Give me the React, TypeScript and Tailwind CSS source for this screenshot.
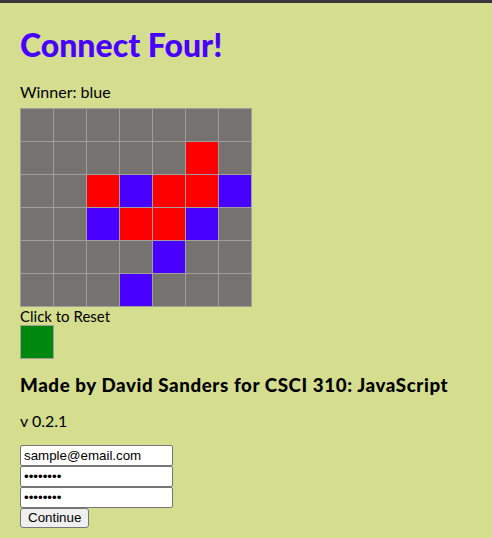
import React from "react";

type Cell = "" | "r" | "b";

const BOARD: Cell[][] = [
  ["", "", "", "", "", "", ""],
  ["", "", "", "", "", "r", ""],
  ["", "", "r", "b", "r", "r", "b"],
  ["", "", "b", "r", "r", "b", ""],
  ["", "", "", "", "b", "", ""],
  ["", "", "", "b", "", "", ""],
];

function cellColor(c: Cell) {
  if (c === "r") return "bg-[#ff0000]";
  if (c === "b") return "bg-[#4800ff]";
  return "bg-[#767270]";
}

export default function App() {
  return (
    <div className="min-h-screen bg-[#d5dd8f] font-['Lato',sans-serif] text-black">
      <div className="h-[3px] bg-[#38383c]" />
      <div className="pl-[20px] flex flex-col items-start">
        <h1 className="mt-[22px] text-[32px] leading-[40px] font-black text-[#4800ff]">Connect Four!</h1>
        <p className="mt-[17px] text-[16px] leading-[20px]">Winner: blue</p>
        <div className="mt-[6px] grid grid-cols-7 border-l border-t border-[#a19e9c]">
          {BOARD.flat().map((c, i) => (
            <div key={i} className={`w-[33px] h-[33px] border-r border-b border-[#a19e9c] ${cellColor(c)}`} />
          ))}
        </div>
        <p className="text-[15px] leading-[18px]">Click to Reset</p>
        <button className="w-[34px] h-[34px] border border-[#a19e9c] bg-[#00870d]" />
        <h3 className="mt-[14px] text-[18.72px] leading-[24px] font-black tracking-[0.6px]">
          Made by David Sanders for CSCI 310: JavaScript
        </h3>
        <p className="mt-[14px] text-[16px] leading-[20px]">v 0.2.1</p>
        <form className="mt-[14px] flex flex-col items-start font-['Liberation_Sans',Arial,sans-serif] text-[13.33px]">
          <input
            type="email"
            defaultValue="sample@email.com"
            className="w-[153px] h-[21px] px-[3px] border border-[#767676] rounded-[2px] bg-white"
          />
          <input
            type="password"
            defaultValue="password"
            className="w-[153px] h-[21px] px-[3px] border border-[#767676] rounded-[2px] bg-white"
          />
          <input
            type="password"
            defaultValue="password"
            className="w-[153px] h-[21px] px-[3px] border border-[#767676] rounded-[2px] bg-white"
          />
          <button
            type="button"
            className="h-[20px] px-[7px] border border-[#767676] rounded-[3px] bg-[#efefef] leading-[16px]"
          >
            Continue
          </button>
        </form>
      </div>
    </div>
  );
}
